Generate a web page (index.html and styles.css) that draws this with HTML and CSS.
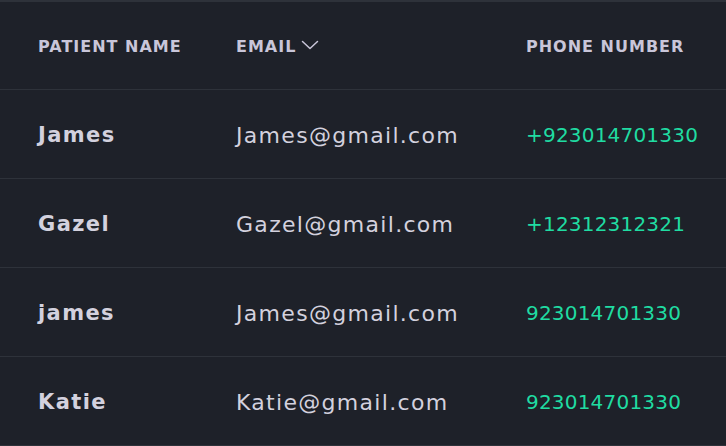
FILE: index.html
```html
<!DOCTYPE html>
<html>
<head>
<meta charset="utf-8">
<link rel="stylesheet" href="styles.css">
</head>
<body>
<table class="patients">
  <thead>
    <tr>
      <th class="col-name">PATIENT NAME</th>
      <th class="col-email"><span class="sort">EMAIL <svg class="chev" width="18" height="10" viewBox="0 0 18 10"><path d="M1.5 1.5 L9 8.5 L16.5 1.5" fill="none" stroke="currentColor" stroke-width="1.5" stroke-linecap="round" stroke-linejoin="round"/></svg></span></th>
      <th class="col-phone">PHONE NUMBER</th>
    </tr>
  </thead>
  <tbody>
    <tr><td class="name">James</td><td class="email">James@gmail.com</td><td class="phone">+923014701330</td></tr>
    <tr><td class="name">Gazel</td><td class="email">Gazel@gmail.com</td><td class="phone">+12312312321</td></tr>
    <tr><td class="name">james</td><td class="email">James@gmail.com</td><td class="phone">923014701330</td></tr>
    <tr><td class="name">Katie</td><td class="email">Katie@gmail.com</td><td class="phone">923014701330</td></tr>
  </tbody>
</table>
</body>
</html>
```
FILE: styles.css
```css
html, body {
  margin: 0;
  padding: 0;
  background: #1e2129;
}
body {
  font-family: "DejaVu Sans", "Open Sans", sans-serif;
  width: 726px;
  height: 446px;
  overflow: hidden;
}
.patients {
  width: 726px;
  border-collapse: collapse;
  table-layout: fixed;
  border-top: 2px solid #2e323a;
}
th, td {
  box-sizing: border-box;
  text-align: left;
  padding: 0 0 0 38px;
  border-bottom: 1px solid #2e323a;
  white-space: nowrap;
}
.col-name { width: 198px; }
.col-email { width: 290px; }
.col-phone { width: 238px; }
th {
  height: 88px;
  padding-top: 2px;
  font-size: 16px;
  font-weight: 700;
  letter-spacing: 1px;
  color: #c9c6d9;
}
td {
  height: 89px;
  padding-top: 3px;
  font-size: 21px;
  color: #d3d1de;
}
.sort {
  display: inline-flex;
  align-items: center;
  gap: 5px;
}
.chev { color: #c9c6d9; margin-top: -2px; }
.name { font-weight: 700; letter-spacing: 1.4px; }
.email { font-weight: 400; font-size: 22px; letter-spacing: 1.3px; }
.phone { color: #20dca2; font-weight: 400; font-size: 20px; letter-spacing: 0.2px; }
```
